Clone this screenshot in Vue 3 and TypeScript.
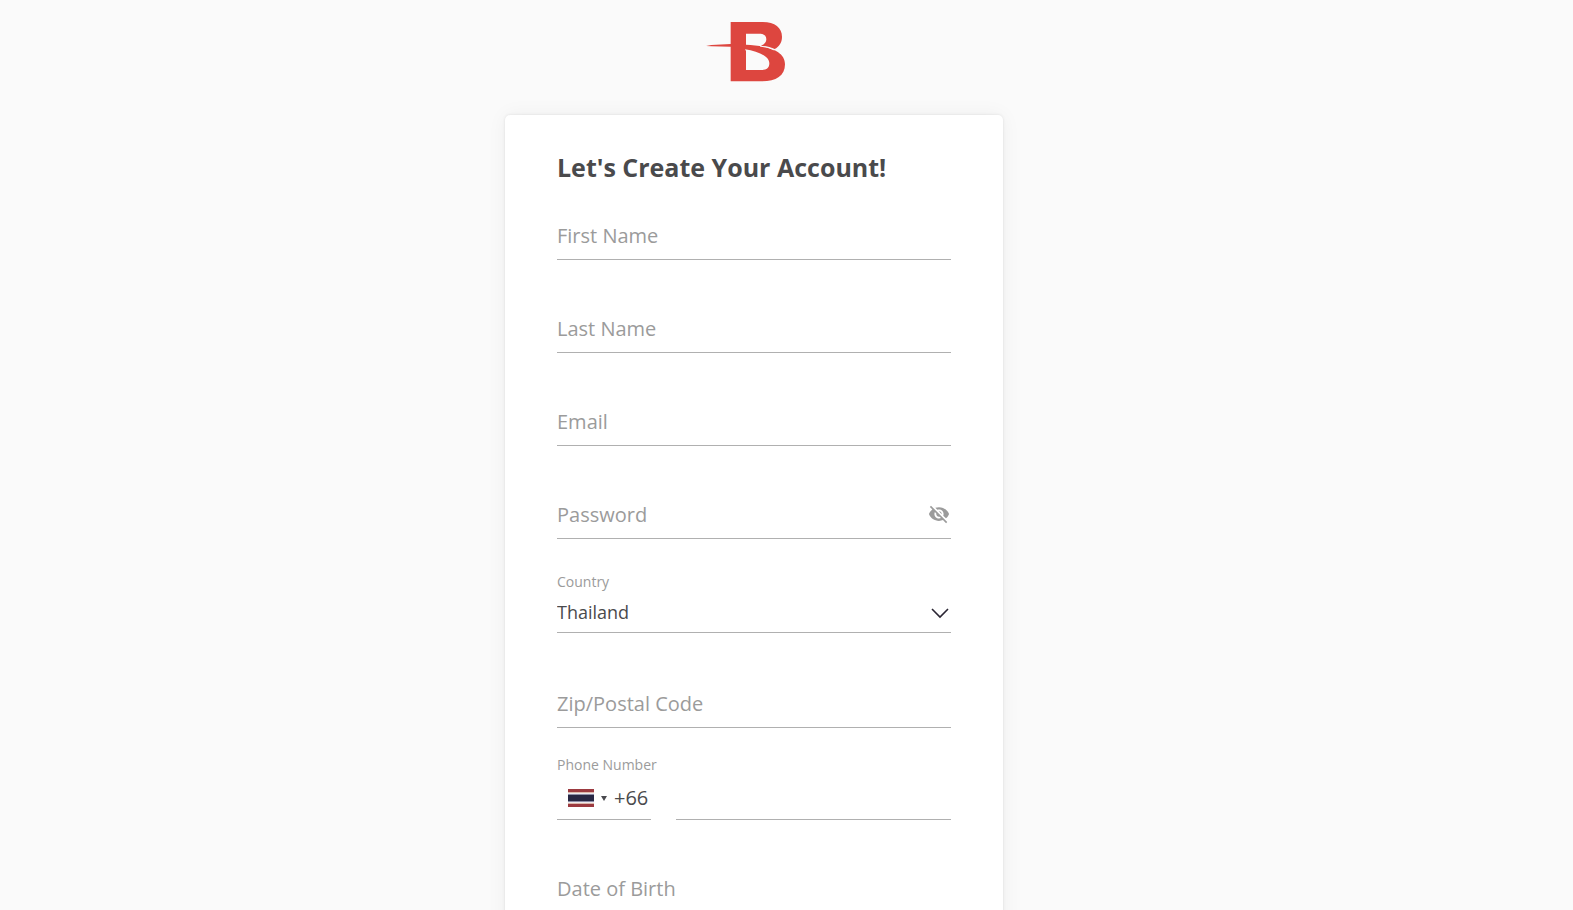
<script setup lang="ts">
import { ref } from 'vue'

const firstName = ref('')
const lastName = ref('')
const email = ref('')
const password = ref('')
const showPassword = ref(false)
const country = ref('Thailand')
const zip = ref('')
const phone = ref('')
const birthDate = ref('')
</script>

<template>
  <div class="page">
    <header class="brand">
      <svg class="logo" viewBox="48 36 288 180" role="img" aria-label="B">
        <path
          fill="#dd463f"
          fill-rule="evenodd"
          d="M122 36H218C255 36 276 54 276 80C276 98 267 110 254 117C240 111 226 108 212 107C222 104 229 98 229 88C229 77 222 71 208 71H168V104C222 106 285 119 285 163C285 198 258 214 215 214H122V110L64 109L48 108L64 105L122 102ZM165 118L168 123V180H215C230 180 238 174 238 160C238 139 205 124 165 118Z"
        />
        <path d="M210 108Q236 111 253 120" fill="none" stroke="#fafafa" stroke-width="3" />
      </svg>
    </header>

    <main class="card">
      <h1 class="title">Let's Create Your Account!</h1>
      <form @submit.prevent>
        <div class="field">
          <input id="first-name" v-model="firstName" class="control" type="text" placeholder=" " />
          <label for="first-name" class="hint">First Name</label>
        </div>
        <div class="field">
          <input id="last-name" v-model="lastName" class="control" type="text" placeholder=" " />
          <label for="last-name" class="hint">Last Name</label>
        </div>
        <div class="field">
          <input id="email" v-model="email" class="control" type="email" placeholder=" " />
          <label for="email" class="hint">Email</label>
        </div>
        <div class="field">
          <input
            id="password"
            v-model="password"
            class="control"
            :type="showPassword ? 'text' : 'password'"
            placeholder=" "
          />
          <label for="password" class="hint">Password</label>
          <button
            type="button"
            class="reveal"
            aria-label="Toggle password visibility"
            @click="showPassword = !showPassword"
          >
            <svg width="22" height="22" viewBox="0 0 24 24" fill="#9b9b9b">
              <path
                d="M12 7c2.76 0 5 2.24 5 5 0 .65-.13 1.26-.36 1.83l2.92 2.92c1.51-1.26 2.7-2.89 3.43-4.75-1.73-4.39-6-7.5-11-7.5-1.4 0-2.74.25-3.98.7l2.16 2.16C10.74 7.13 11.35 7 12 7zM2 4.27l2.28 2.28.46.46C3.08 8.3 1.78 10.02 1 12c1.73 4.39 6 7.5 11 7.5 1.55 0 3.03-.3 4.38-.84l.42.42L19.73 22 21 20.73 3.27 3 2 4.27zM7.53 9.8l1.55 1.55c-.05.21-.08.43-.08.65 0 1.66 1.34 3 3 3 .22 0 .44-.03.65-.08l1.55 1.55c-.67.33-1.41.53-2.2.53-2.76 0-5-2.24-5-5 0-.79.2-1.53.53-2.2zm4.31-.78l3.15 3.15.02-.16c0-1.66-1.34-3-3-3l-.17.01z"
              />
            </svg>
          </button>
        </div>

        <div class="country">
          <label for="country" class="caption">Country</label>
          <div class="select-box">
            <select id="country" v-model="country" class="select">
              <option>Thailand</option>
            </select>
            <svg class="chevron" width="18" height="12" viewBox="0 0 18 12">
              <path d="M1 1L9 9L17 1" fill="none" stroke="#2a2533" stroke-width="1.6" />
            </svg>
          </div>
        </div>

        <div class="field field--zip">
          <input id="zip" v-model="zip" class="control" type="text" placeholder=" " />
          <label for="zip" class="hint">Zip/Postal Code</label>
        </div>

        <div class="phone">
          <label for="phone" class="caption">Phone Number</label>
          <div class="phone-row">
            <button type="button" class="dial">
              <svg width="26" height="18" viewBox="0 0 26 18" aria-hidden="true">
                <rect width="26" height="18" fill="#eee9ee" />
                <rect width="26" height="3" fill="#9c3a40" />
                <rect y="3" width="26" height="1" fill="#dcb8ac" />
                <rect y="5" width="26" height="8" fill="#8d8fa8" />
                <rect y="6" width="26" height="6" fill="#272744" />
                <rect y="14" width="26" height="1" fill="#dcb8ac" />
                <rect y="15" width="26" height="3" fill="#9c3a40" />
              </svg>
              <svg class="caret" width="6" height="5" viewBox="0 0 6 5" aria-hidden="true">
                <path d="M0 0H6L3 5Z" fill="#4a4a4f" />
              </svg>
              <span>+66</span>
            </button>
            <input id="phone" v-model="phone" class="number" type="tel" />
          </div>
        </div>

        <div class="field field--birth">
          <input id="birth-date" v-model="birthDate" class="control" type="text" placeholder=" " />
          <label for="birth-date" class="hint">Date of Birth</label>
        </div>
      </form>
    </main>
  </div>
</template>

<style>
body {
  background: #fafafa;
}
</style>

<style scoped>
.page {
  box-sizing: border-box;
  height: 100vh;
  overflow: hidden;
  padding-right: 65px;
  background: #fafafa;
  color: #4a4a4c;
  font-family: 'Open Sans', 'Noto Sans', sans-serif;
}

.brand {
  display: flex;
  justify-content: center;
  padding: 22px 0 33px;
}

.logo {
  width: 96px;
  height: 60px;
}

.card {
  box-sizing: border-box;
  width: 100%;
  max-width: 498px;
  margin: 0 auto;
  padding: 34px 52px 52px;
  border-radius: 5px;
  background: #fff;
  box-shadow: 0 0 3px rgba(0, 0, 0, 0.1), 0 0 20px rgba(0, 0, 0, 0.05);
}

.title {
  margin: 0 0 37px;
  font-size: 25px;
  font-weight: 700;
  line-height: 36px;
}

.field {
  display: grid;
  grid-template-columns: 1fr auto;
}

.field + .field,
.field--birth {
  margin-top: 55px;
}

.control,
.select,
.number,
.dial {
  box-sizing: border-box;
  min-width: 0;
  margin: 0;
  padding: 0;
  border: 0;
  border-bottom: 1px solid #b0b0b0;
  border-radius: 0;
  outline: 0;
  background: transparent;
  color: #4a4a4c;
  font-family: inherit;
  font-size: 20px;
}

.control {
  grid-area: 1 / 1 / 2 / 3;
  height: 38px;
  padding-bottom: 9px;
}

.control:focus,
.select:focus,
.number:focus,
.dial:focus {
  border-bottom-color: #4a4a4c;
}

.hint {
  grid-area: 1 / 1 / 2 / 2;
  color: #9b9b9b;
  font-size: 20px;
  line-height: 28px;
  pointer-events: none;
}

.control:focus + .hint,
.control:not(:placeholder-shown) + .hint {
  margin-top: -20px;
  font-size: 14px;
  line-height: 20px;
}

.reveal {
  grid-area: 1 / 2 / 2 / 3;
  align-self: start;
  display: flex;
  margin: 0;
  padding: 2px 1px 0 0;
  border: 0;
  background: transparent;
  cursor: pointer;
}

.caption {
  display: block;
  color: #9b9b9b;
  font-size: 14px;
  line-height: 20px;
}

.country {
  margin-top: 33px;
}

.select-box {
  display: grid;
  grid-template-columns: 1fr auto;
  align-items: center;
  margin-top: 6px;
}

.select {
  grid-area: 1 / 1 / 2 / 3;
  height: 35px;
  padding-bottom: 6px;
  appearance: none;
  font-size: 18px;
}

.chevron {
  grid-area: 1 / 2 / 2 / 3;
  margin: 0 2px 4px 0;
  pointer-events: none;
}

.field--zip {
  margin-top: 57px;
}

.phone {
  margin-top: 27px;
}

.phone-row {
  display: flex;
  gap: 25px;
  margin-top: 9px;
}

.dial {
  display: flex;
  flex: none;
  align-items: center;
  width: 94px;
  height: 36px;
  padding: 0 0 7px 11px;
  line-height: 28px;
  cursor: pointer;
}

.caret {
  margin: 0 7px;
}

.number {
  flex: 1;
  height: 36px;
  padding-bottom: 7px;
}
</style>
